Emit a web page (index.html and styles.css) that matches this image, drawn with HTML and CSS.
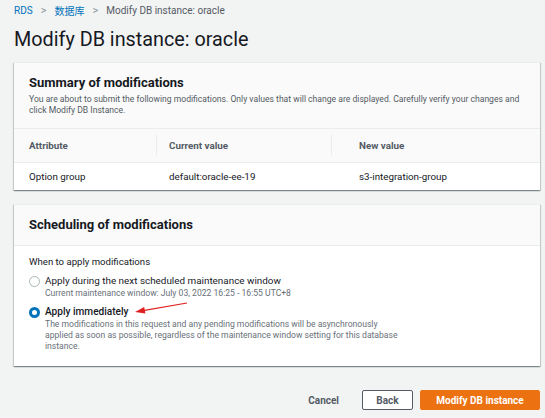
FILE: index.html
```html
<!DOCTYPE html>
<html>
<head>
<meta charset="utf-8">
<link rel="stylesheet" href="styles.css">
</head>
<body>
<div class="page">
  <nav class="crumbs">
    <a class="crumb-link">RDS</a>
    <span class="sep">&gt;</span>
    <a class="crumb-link">数据库</a>
    <span class="sep">&gt;</span>
    <span class="crumb-current">Modify DB instance: oracle</span>
  </nav>
  <h1 class="page-title">Modify DB instance: oracle</h1>

  <section class="card">
    <div class="card-header">
      <h2 class="card-title">Summary of modifications</h2>
      <p class="card-desc">You are about to submit the following modifications. Only values that will change are displayed. Carefully verify your changes and click Modify DB Instance.</p>
    </div>
    <div class="table">
      <div class="row head">
        <div class="cell c1">Attribute</div>
        <div class="cell c2">Current value</div>
        <div class="cell c3">New value</div>
      </div>
      <div class="row">
        <div class="cell c1">Option group</div>
        <div class="cell c2">default:oracle-ee-19</div>
        <div class="cell c3">s3-integration-group</div>
      </div>
    </div>
  </section>

  <section class="card card2">
    <div class="card-header plain">
      <h2 class="card-title">Scheduling of modifications</h2>
    </div>
    <div class="card-body">
      <div class="label">When to apply modifications</div>
      <div class="option">
        <span class="radio"></span>
        <div class="opt-text">
          <div class="opt-label">Apply during the next scheduled maintenance window</div>
          <div class="opt-desc">Current maintenance window: July 03, 2022 16:25 - 16:55 UTC+8</div>
        </div>
      </div>
      <div class="option checked">
        <span class="radio on"></span>
        <div class="opt-text">
          <div class="opt-label">Apply immediately</div>
          <div class="opt-desc">The modifications in this request and any pending modifications will be asynchronously applied as soon as possible, regardless of the maintenance window setting for this database instance.</div>
        </div>
        <svg class="arrow" width="56" height="16" viewBox="0 0 56 16">
          <line x1="54" y1="2" x2="10" y2="9.6" stroke="#e02020" stroke-width="1.2"/>
          <polygon points="2,11 12.4,12.6 11.2,6" fill="#e02020"/>
        </svg>
      </div>
    </div>
  </section>

  <div class="actions">
    <button class="btn link">Cancel</button>
    <button class="btn normal">Back</button>
    <button class="btn primary">Modify DB instance</button>
  </div>
</div>
</body>
</html>
```

FILE: styles.css
```css
* { box-sizing: border-box; }
html, body {
  margin: 0;
  padding: 0;
  background: #f2f3f3;
}
body {
  font-family: Roboto, "Noto Sans CJK SC", sans-serif;
  color: #16191f;
  width: 545px;
  height: 418px;
  overflow: hidden;
}
.page {
  padding: 2px 5px 0 14px;
}
.crumbs {
  display: flex;
  align-items: center;
  font-size: 10px;
  height: 16px;
}
.crumb-link { color: #0073bb; }
.sep {
  color: #879596;
  margin: 0 8px;
  font-size: 11px;
}
.crumb-current { color: #545b64; }
.page-title {
  margin: 9px 0 0;
  font-size: 19.8px;
  font-weight: 400;
  line-height: 26px;
}
.card {
  margin-top: 9px;
  background: #fff;
  box-shadow: 0 1px 1px 0 rgba(0,28,36,.3), 1px 1px 1px 0 rgba(0,28,36,.15), -1px 1px 1px 0 rgba(0,28,36,.15);
  border-top: 1px solid #eaeded;
}
.card-header {
  background: #fafafa;
  padding: 11px 15px 12px;
  border-bottom: 1px solid #eaeded;
}
.card-title {
  margin: 0;
  font-size: 13px;
  font-weight: 700;
  line-height: 18px;
}
.card-desc {
  margin: 2px 0 0;
  font-size: 8.6px;
  line-height: 11px;
  color: #545b64;
}
.table { font-size: 9.8px; }
.row {
  display: grid;
  grid-template-columns: 142px 175px 1fr;
  height: 27px;
  align-items: center;
}
.row.head {
  height: 34px;
  background: #fafafa;
  border-bottom: 1px solid #eaeded;
  font-weight: 700;
  color: #545b64;
}
.cell { padding-left: 15px; position: relative; }
.c2 { padding-left: 13px; }
.c3 { padding-left: 28px; }
.row.head .c2::before, .row.head .c3::before {
  content: "";
  position: absolute;
  left: 0;
  top: -5px;
  height: 20px;
  border-left: 1px solid #eaeded;
}
.card2 { margin-top: 14px; }
.card-header.plain { padding: 11px 15px 11px; }
.card-body {
  padding: 9px 15px 14px;
  font-size: 9.6px;
}
.label { line-height: 14px; margin-bottom: 5px; }
.option {
  display: flex;
  gap: 5px;
  position: relative;
  margin-bottom: 6px;
}
.option:last-child { margin-bottom: 0; }
.radio {
  width: 11px;
  height: 11px;
  border-radius: 50%;
  border: 1px solid #aab7b8;
  margin-top: 2px;
  flex: none;
  background: #fff;
}
.radio.on {
  border: 3.5px solid #0073bb;
}
.opt-label { line-height: 14px; font-size: 9.9px; }
.opt-desc {
  font-size: 8.6px;
  line-height: 11px;
  color: #687078;
  max-width: 355px;
}
.checked .opt-label { font-size: 10.1px; font-weight: 500; }
.arrow {
  position: absolute;
  left: 104px;
  top: -4px;
}
.actions {
  display: flex;
  justify-content: flex-end;
  align-items: center;
  margin-top: 24px;
  gap: 7px;
}
.btn {
  font-family: inherit;
  font-size: 10px;
  font-weight: 700;
  height: 20px;
  border-radius: 2px;
  padding: 0;
  white-space: nowrap;
  cursor: pointer;
}
.btn.link {
  background: none;
  border: none;
  color: #545b64;
  margin-right: 16px;
}
.btn.normal {
  background: #fff;
  border: 1px solid #545b64;
  color: #545b64;
  width: 51px;
}
.btn.primary {
  background: #ec7211;
  border: 1px solid #ec7211;
  color: #fff;
  width: 120px;
}
```
